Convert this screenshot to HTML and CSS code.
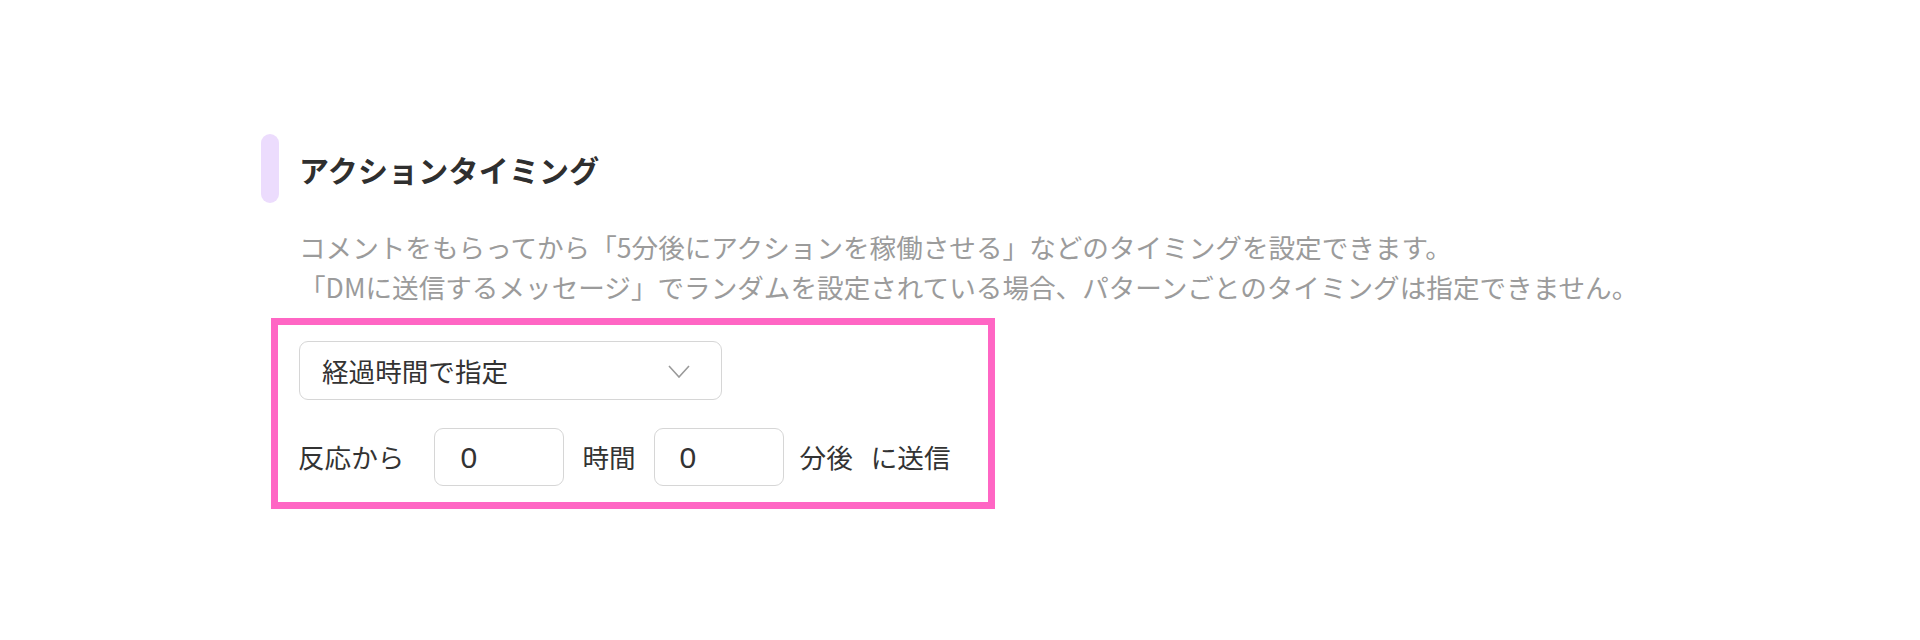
FILE: index.html
```html
<!DOCTYPE html>
<html lang="ja">
<head>
<meta charset="utf-8">
<title>アクションタイミング</title>
<link rel="stylesheet" href="styles.css">
</head>
<body>
<div class="page">
  <section class="section">
    <div class="heading">
      <span class="bar"></span>
      <h2 class="title">アクションタイミング</h2>
    </div>
    <p class="desc">コメントをもらってから「5分後にアクションを稼働させる」などのタイミングを設定できます。<br>「DMに送信するメッセージ」でランダムを設定されている場合、パターンごとのタイミングは指定できません。</p>
    <div class="highlight">
      <div class="select">
        <span class="select-text">経過時間で指定</span>
        <svg class="chevron" width="22" height="13" viewBox="0 0 22 13"><polyline points="1,1 11,12 21,1" fill="none" stroke="#9a9a9a" stroke-width="1.6"/></svg>
      </div>
      <div class="row">
        <span class="label label-first">反応から</span>
        <input class="num" type="text" value="0">
        <span class="label">時間</span>
        <input class="num" type="text" value="0">
        <span class="label label-min">分後</span>
        <span class="label">に送信</span>
      </div>
    </div>
  </section>
</div>
</body>
</html>
```

FILE: styles.css
```css
html, body {
  margin: 0;
  padding: 0;
  background: #ffffff;
}

body {
  font-family: "Noto Sans CJK JP", "Noto Sans", sans-serif;
  color: #333333;
}

.section {
  padding: 134px 0 0 261px;
}

.heading {
  display: flex;
  align-items: center;
  gap: 20px;
}

.bar {
  display: block;
  width: 18px;
  height: 69px;
  border-radius: 9px;
  background: #ecdcfd;
}

.title {
  margin: 0;
  font-size: 30px;
  font-weight: 700;
  line-height: 40px;
  color: #2f2f2f;
  letter-spacing: 0.2px;
}

.desc {
  margin: 24px 0 0 38px;
  font-size: 26.6px;
  line-height: 40px;
  color: #9b9b9b;
}

.highlight {
  margin: 11px 0 0 10px;
  width: 724px;
  box-sizing: border-box;
  border: 7px solid #ff66c4;
  padding: 16px 20px 16px 21px;
}

.select {
  display: flex;
  align-items: center;
  justify-content: space-between;
  width: 423px;
  height: 59px;
  box-sizing: border-box;
  border: 1px solid #d6d6d6;
  border-radius: 9px;
  padding: 0 31px 0 22px;
}

.select-text {
  font-size: 26.6px;
  line-height: 1;
  color: #333333;
  padding-top: 2px;
}

.chevron {
  display: block;
  margin-top: 2px;
}

.row {
  display: flex;
  align-items: center;
  margin-top: 28px;
}

.label {
  font-size: 26.6px;
  line-height: 1;
  color: #333333;
  margin: 0 18px;
  white-space: nowrap;
}

.label-first {
  margin-left: -1px;
  margin-right: 30px;
}

.label-min {
  margin-left: 16px;
  margin-right: 0;
}

.num {
  width: 130px;
  height: 58px;
  box-sizing: border-box;
  border: 1px solid #d6d6d6;
  border-radius: 9px;
  padding: 2px 0 0 25px;
  font-family: "Liberation Sans", Arial, sans-serif;
  font-size: 30px;
  color: #333333;
  background: #ffffff;
  outline: none;
}
```
